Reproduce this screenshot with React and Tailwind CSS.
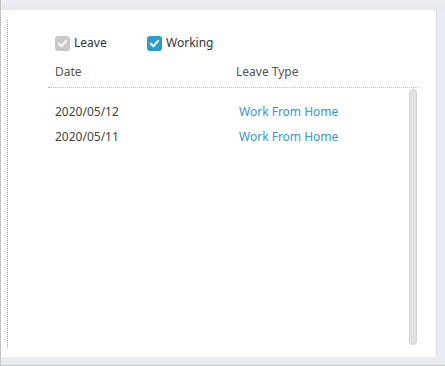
import React from "react";

function Check({ color }) {
  return (
    <span className={`w-[15px] h-[15px] rounded-[3px] flex items-center justify-center ${color}`}>
      <svg width="11" height="11" viewBox="0 0 12 12">
        <path d="M2 6.2 L4.8 9 L10 3.2" fill="none" stroke="white" strokeWidth="2.2" strokeLinecap="round" strokeLinejoin="round" />
      </svg>
    </span>
  );
}

export default function App() {
  const rows = [
    ["2020/05/12", "Work From Home"],
    ["2020/05/11", "Work From Home"],
  ];
  return (
    <div
      className="w-[445px] h-[366px] bg-[#e9ecf0] border-l border-b border-[#c2c2c2] flex flex-col overflow-hidden"
      style={{ fontFamily: '"Noto Sans", sans-serif' }}
    >
      <div className="h-[10px] bg-gradient-to-b from-[#eef0f3] to-[#e6e9ee]" />
      <div className="w-[436px] h-[347px] bg-white border-r border-[#dcdfe3] rounded-tr-[4px] flex py-[10px] pl-[6px]">
        <div className="border-l border-dotted border-[#a8a8a8] h-full" />
        <div className="flex-1 flex flex-col pl-[40px] pr-[18px]">
          <div className="flex items-center pl-[7px] pt-[14px] text-[12px] text-[#333]">
            <div className="flex items-center gap-[4px] w-[92px]">
              <Check color="bg-[#c9c9c9]" />
              <span>Leave</span>
            </div>
            <div className="flex items-center gap-[4px]">
              <Check color="bg-[#2b9ad0]" />
              <span>Working</span>
            </div>
          </div>
          <div className="flex pl-[7px] pt-[11px] pb-[6px] text-[12px] text-[#555] border-b border-dotted border-[#b8b8b8]">
            <span className="w-[181px]">Date</span>
            <span>Leave Type</span>
          </div>
          <div className="flex flex-1 pt-[1px]">
            <div className="flex-1 flex flex-col pt-[10px] text-[12px]">
              {rows.map(([d, t], i) => (
                <div key={i} className="flex h-[25px] items-center pl-[7px]">
                  <span className="w-[184px] text-[#444]">{d}</span>
                  <span className="text-[#3597cf]">{t}</span>
                </div>
              ))}
            </div>
            <div className="w-[8px] mr-[1px] mb-[2px] bg-[#e2e2e2] border border-[#d4d4d4] rounded-full" />
          </div>
        </div>
      </div>
    </div>
  );
}
